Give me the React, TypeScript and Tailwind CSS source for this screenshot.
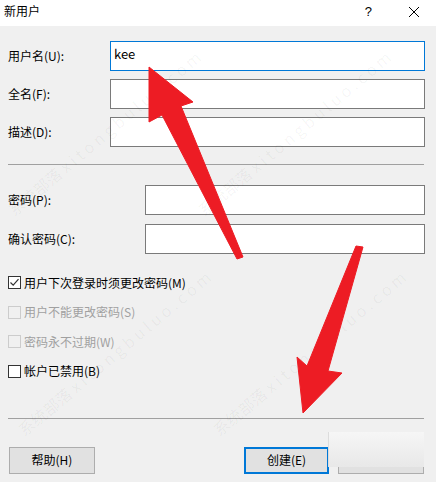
import React from "react";

function Row({ label, labelW, focused, value }: { label: string; labelW: string; focused?: boolean; value?: string }) {
  return (
    <div className="flex items-center">
      <div className={`${labelW} shrink-0 leading-none`}>{label}</div>
      <div className={`flex-1 h-[30px] bg-white border ${focused ? "border-[#0078d7]" : "border-[#7a7a7a]"} pl-[3px] pt-[5px] leading-[14px] text-[13px]`}>
        {value}
      </div>
    </div>
  );
}

function Check({ label, checked, disabled }: { label: string; checked?: boolean; disabled?: boolean }) {
  return (
    <div className="flex items-center h-[13px]">
      <div className={`w-[13px] h-[13px] border ${disabled ? "border-[#cccccc] bg-[#f0f0f0]" : "border-[#333333] bg-white"} flex items-center justify-center`}>
        {checked && (
          <svg width="11" height="11" viewBox="0 0 11 11">
            <polyline points="1.5,5.5 4.2,8.2 9.5,2.2" fill="none" stroke="#333" strokeWidth="1.2" />
          </svg>
        )}
      </div>
      <span className={`ml-[3px] leading-none ${disabled ? "text-[#a0a0a0]" : "text-black"}`}>{label}</span>
    </div>
  );
}

const WM = "系统部落 x i t o n g b u l u o . c o m";

export default function App() {
  const marks = [
    [10, 200], [200, 200],
    [20, 420], [215, 420],
  ];
  return (
    <div className="relative w-[436px] h-[482px] overflow-hidden bg-[#f0f0f0] font-['Noto_Sans_CJK_SC',sans-serif] text-[12px] text-black">
      <div className="h-[26px] bg-white flex items-center pl-[4px]">
        <span className="pb-[4px] leading-none text-[12px]">新用户</span>
        <span className="ml-auto mr-[36px] pb-[4px] leading-none text-[13px] font-['Liberation_Sans',sans-serif]">?</span>
        <svg width="12" height="12" viewBox="0 0 12 12" className="mr-[16px] mb-[2px]">
          <path d="M1 1 L11 11 M11 1 L1 11" stroke="#000" strokeWidth="1" />
        </svg>
      </div>

      <div className="pl-[8px] pr-[11px] pt-[15px] flex flex-col">
        <div className="flex flex-col gap-[8px]">
          <Row label="用户名(U):" labelW="w-[102px]" focused value="kee" />
          <Row label="全名(F):" labelW="w-[102px]" />
          <Row label="描述(D):" labelW="w-[102px]" />
        </div>
        <div className="mt-[17px] mr-[1px] h-[1px] bg-[#a0a0a0]" />
        <div className="mt-[20px] flex flex-col gap-[9px]">
          <Row label="密码(P):" labelW="w-[137px]" />
          <Row label="确认密码(C):" labelW="w-[137px]" />
        </div>
        <div className="mt-[22px] flex flex-col gap-[16.5px]">
          <Check label="用户下次登录时须更改密码(M)" checked />
          <Check label="用户不能更改密码(S)" disabled />
          <Check label="密码永不过期(W)" disabled />
          <Check label="帐户已禁用(B)" />
        </div>
        <div className="mt-[40px] mr-[1px] h-[1px] bg-[#a0a0a0]" />
        <div className="mt-[28px] flex items-center">
          <div className="ml-[1px] w-[86px] h-[27px] bg-[#e1e1e1] border border-[#adadad] flex items-center justify-center leading-none">帮助(H)</div>
          <div className="ml-[149px] w-[85px] h-[27px] bg-[#e1e1e1] border-2 border-[#0078d7] flex items-center justify-center leading-none">创建(E)</div>
          <div className="ml-[9px] w-[86px] h-[27px] bg-[#e1e1e1] border border-[#adadad]" />
        </div>
      </div>

      {/* watermark blot over cancel button */}
      <div className="absolute left-[328px] top-[432px] w-[96px] h-[35px] bg-gradient-to-b from-[#f6f6f6] to-[#e8e8e8] border-l border-[#dcdcdc]" />

      {/* watermarks */}
      <div className="absolute inset-0 pointer-events-none">
        {marks.map(([x, y], i) => (
          <div
            key={i}
            className="absolute whitespace-nowrap text-[16px] text-black/[0.045] origin-left"
            style={{ left: x, top: y, transform: "rotate(-40deg)" }}
          >
            {WM}
          </div>
        ))}
      </div>

      {/* red arrows */}
      <svg className="absolute inset-0 pointer-events-none" width="436" height="482" viewBox="0 0 436 482">
        <polygon
          points="149,67 193,102 181,106 243,257 237,259 162,115 149,122"
          fill="#ed1c24"
          stroke="#ed1c24"
          strokeWidth="1"
          strokeLinejoin="round"
        />
        <polygon
          points="356,246 363,247 328,371 342,373 303,413 297,357 307,366"
          fill="#ed1c24"
          stroke="#ed1c24"
          strokeWidth="1"
          strokeLinejoin="round"
        />
      </svg>
    </div>
  );
}
